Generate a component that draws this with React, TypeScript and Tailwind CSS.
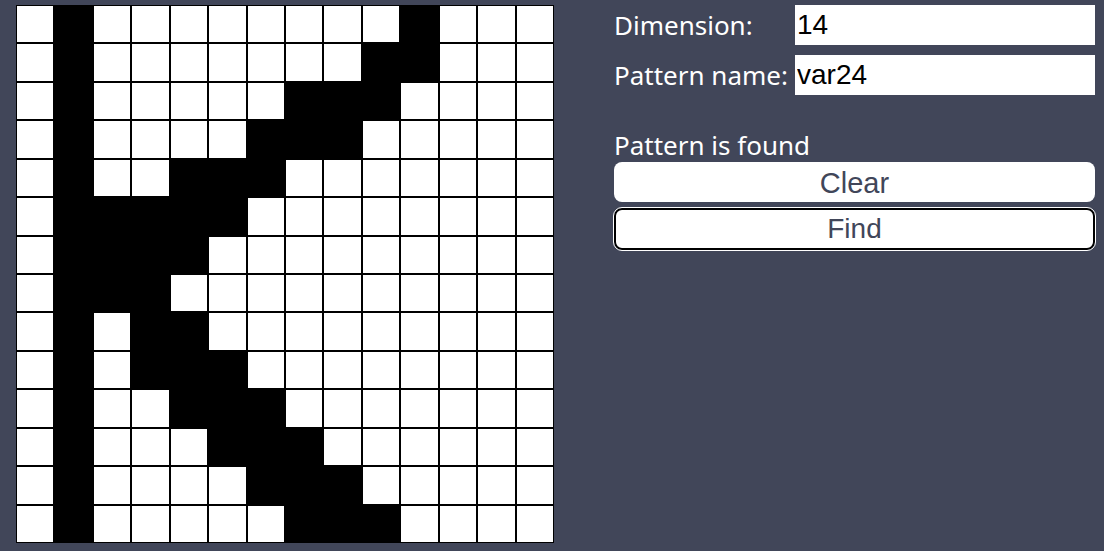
import React from 'react'

const PATTERN: number[][] = [
  [1, 10],
  [1, 9, 10],
  [1, 7, 8, 9],
  [1, 6, 7, 8],
  [1, 4, 5, 6],
  [1, 2, 3, 4, 5],
  [1, 2, 3, 4],
  [1, 2, 3],
  [1, 3, 4],
  [1, 3, 4, 5],
  [1, 4, 5, 6],
  [1, 5, 6, 7],
  [1, 6, 7, 8],
  [1, 7, 8, 9],
]

const SIZE = 14

function Grid() {
  return (
    <div className="grid grid-cols-[repeat(14,1fr)] grid-rows-[repeat(14,1fr)] w-[538px] h-[538px] shrink-0">
      {PATTERN.map((row, r) =>
        Array.from({ length: SIZE }, (_, c) => (
          <div
            key={`${r}-${c}`}
            className={`border border-black ${row.includes(c) ? 'bg-black' : 'bg-white'}`}
          />
        ))
      )}
    </div>
  )
}

export default function App() {
  return (
    <div className="min-h-screen bg-[#414659] flex items-start pt-[5px] pl-[16px] font-['Noto_Sans',sans-serif]">
      <Grid />

      <div className="ml-[60px] w-[481px] flex flex-col">
        <div className="flex items-center h-[40px]">
          <label className="w-[181px] shrink-0 text-[26px] text-white">Dimension:</label>
          <input
            defaultValue="14"
            className="w-[300px] min-w-0 h-[40px] bg-white px-[2px] text-[28px] text-black font-['Liberation_Sans',Arial,sans-serif] outline-none"
          />
        </div>
        <div className="flex items-center h-[40px] mt-[10px]">
          <label className="w-[181px] shrink-0 text-[26px] text-white whitespace-nowrap">Pattern name:</label>
          <input
            defaultValue="var24"
            className="w-[300px] min-w-0 h-[40px] bg-white px-[2px] text-[28px] text-black font-['Liberation_Sans',Arial,sans-serif] outline-none"
          />
        </div>

        <p className="mt-[34px] text-[26px] leading-[33px] text-white">Pattern is found</p>

        <button className="h-[40px] rounded-[8px] bg-white text-[29px] text-[#414659] font-['Liberation_Sans',Arial,sans-serif]">
          Clear
        </button>
        <button className="mt-[6px] h-[42px] rounded-[8px] bg-white border-2 border-black outline-1 outline-solid outline-white text-[28px] leading-[36px] text-[#414659] font-['Liberation_Sans',Arial,sans-serif]">
          Find
        </button>
      </div>
    </div>
  )
}
